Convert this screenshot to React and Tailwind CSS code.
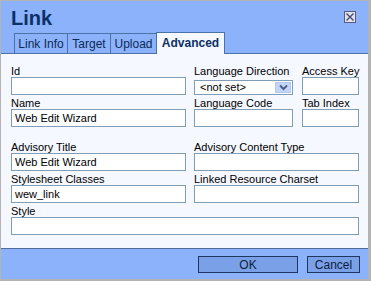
import React from "react";

function Field({ label, width, value, className = "" }) {
  return (
    <div className={"flex flex-col " + className} style={{ width }}>
      <div className="h-[14px] pt-[2px] leading-[12px] text-[11px] text-black whitespace-nowrap">{label}</div>
      <div className="h-[18px] border border-[#7f9db9] bg-white flex items-center px-[3px] text-[11px] text-black whitespace-nowrap">
        {value}
      </div>
    </div>
  );
}

function SelectField() {
  return (
    <div className="flex flex-col w-[99px] ml-[8px]">
      <div className="h-[14px] pt-[2px] leading-[12px] text-[11px] text-black whitespace-nowrap">Language Direction</div>
      <div className="mt-[3px] h-[15px] border border-[#7f9db9] bg-white flex items-center text-[11px] text-black">
        <span className="flex-1 pl-[5px] leading-none">&lt;not set&gt;</span>
        <div className="w-[16px] h-[11px] mr-[1px] bg-[#c3d4fa] border border-[#b4c8f0] flex items-center justify-center">
          <svg width="9" height="7" viewBox="0 0 9 7">
            <path d="M1 1.5 L4.5 5 L8 1.5" stroke="#4d6185" strokeWidth="2" fill="none" />
          </svg>
        </div>
      </div>
    </div>
  );
}

export default function App() {
  return (
    <div className="w-[371px] h-[281px] bg-[#b3b3b3] pt-px pl-px pr-[3px] pb-[2px] font-['Liberation_Sans',sans-serif]">
      <div className="w-full h-full bg-[#8cb2fb] flex flex-col">
        {/* Header */}
        <div className="h-[31px] flex justify-between pl-[10px] pr-[12px]">
          <div className="pt-[7px] text-[20px] leading-[20px] font-bold text-[#0c3166]">Link</div>
          <div className="mt-[10px] w-[12px] h-[12px] border border-[#5a5a7a] bg-[#dfe2f0] flex items-center justify-center">
            <svg width="8" height="8" viewBox="0 0 8 8">
              <path d="M0.5 0.5 L7.5 7.5 M7.5 0.5 L0.5 7.5" stroke="#4a4a6a" strokeWidth="1.4" />
            </svg>
          </div>
        </div>
        {/* Tabs */}
        <div className="h-[21px] flex items-end pl-[13px] text-[12px] relative z-10">
          <div className="w-[54px] h-[20px] border border-b-0 border-[#4a72a7] flex items-center justify-center text-[#0c2a55]">Link Info</div>
          <div className="w-[44px] h-[20px] -ml-px border border-b-0 border-[#4a72a7] flex items-center justify-center text-[#0c2a55]">Target</div>
          <div className="w-[47px] h-[20px] -ml-px border border-b-0 border-[#4a72a7] flex items-center justify-center text-[#0c2a55]">Upload</div>
          <div className="w-[69px] h-[22px] -ml-px -mb-px border border-b-0 border-[#4a72a7] bg-[#f5f8ff] flex items-center justify-center font-bold text-[#0c3166] pb-[1px]">Advanced</div>
        </div>
        {/* Content */}
        <div className="h-[196px] bg-[#f5f8ff] border-t border-b border-t-[#4a72a7] border-b-[#4d6c99] pt-[9px] pl-[10px]">
          <div className="flex">
            <Field label="Id" width={175} value="" />
            <SelectField />
            <Field label="Access Key" width={57} value="" className="ml-[9px]" />
          </div>
          <div className="flex">
            <Field label="Name" width={175} value="Web Edit Wizard" />
            <Field label="Language Code" width={99} value="" className="ml-[8px]" />
            <Field label="Tab Index" width={57} value="" className="ml-[9px]" />
          </div>
          <div className="flex mt-[12px]">
            <Field label="Advisory Title" width={175} value="Web Edit Wizard" />
            <Field label="Advisory Content Type" width={165} value="" className="ml-[8px]" />
          </div>
          <div className="flex">
            <Field label="Stylesheet Classes" width={175} value="wew_link" />
            <Field label="Linked Resource Charset" width={165} value="" className="ml-[8px]" />
          </div>
          <div className="flex">
            <Field label="Style" width={348} value="" />
          </div>
        </div>
        {/* Footer */}
        <div className="flex-1 flex justify-end items-start pt-[7px] pr-[8px] gap-[9px]">
          <div className="w-[100px] h-[17px] border border-[#1e3760] bg-[#7aa0e8] flex items-center justify-center text-[12px] text-[#0c1e3a]">OK</div>
          <div className="w-[53px] h-[17px] border border-[#1e3760] bg-[#7aa0e8] flex items-center justify-center text-[12px] text-[#0c1e3a]">Cancel</div>
        </div>
      </div>
    </div>
  );
}
